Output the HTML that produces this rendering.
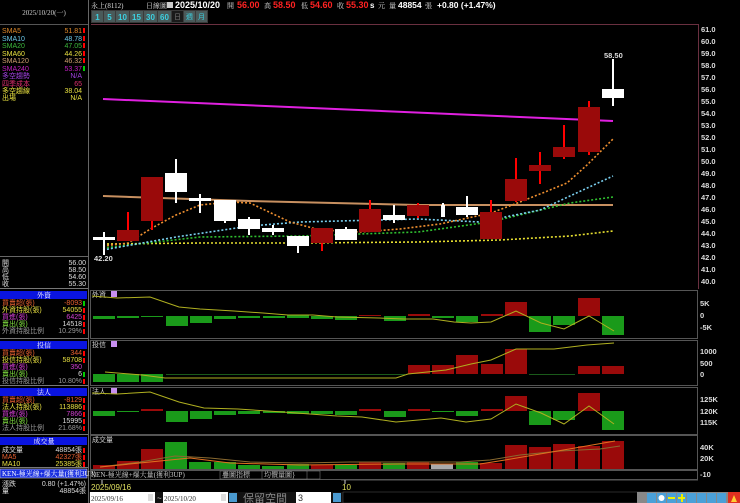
<!DOCTYPE html>
<html><head><meta charset="utf-8">
<style>
html,body{margin:0;padding:0;background:#000;width:740px;height:503px;overflow:hidden}
svg{display:block}
text{font-family:"Liberation Sans","Noto Sans CJK TC",sans-serif}
.s{font-family:"Liberation Serif","Noto Serif CJK SC",serif;font-size:7px}
</style></head><body>
<svg width="740" height="503" viewBox="0 0 740 503" xmlns="http://www.w3.org/2000/svg">
<rect width="740" height="503" fill="#000"/>
<!-- left panel -->
<line x1="88.5" y1="0" x2="88.5" y2="503" stroke="#666"/>
<line x1="0" y1="24.5" x2="88" y2="24.5" stroke="#555"/>
<text x="44" y="15" class="s" fill="#ccc" text-anchor="middle" font-size="8">2025/10/20(一)</text>
<g class="s" font-size="7">
<text x="2" y="33" fill="#e08a2a">SMA5</text><text x="82" y="33" fill="#e08a2a" text-anchor="end">51.81</text>
<text x="2" y="41" fill="#6cc8e8">SMA10</text><text x="82" y="41" fill="#6cc8e8" text-anchor="end">48.78</text>
<text x="2" y="48" fill="#3cb83c">SMA20</text><text x="82" y="48" fill="#3cb83c" text-anchor="end">47.05</text>
<text x="2" y="56" fill="#e8e040">SMA60</text><text x="82" y="56" fill="#e8e040" text-anchor="end">44.26</text>
<text x="2" y="63" fill="#d0a070">SMA120</text><text x="82" y="63" fill="#d0a070" text-anchor="end">46.32</text>
<text x="2" y="71" fill="#c020c0">SMA240</text><text x="82" y="71" fill="#c020c0" text-anchor="end">53.37</text>
<text x="2" y="78" fill="#a040e0">多空趨勢</text><text x="82" y="78" fill="#a040e0" text-anchor="end">N/A</text>
<text x="2" y="86" fill="#e03070">四季成本</text><text x="82" y="86" fill="#e03070" text-anchor="end">65</text>
<text x="2" y="93" fill="#e8e040">多空趨線</text><text x="82" y="93" fill="#e8e040" text-anchor="end">38.04</text>
<text x="2" y="100" fill="#e8e040">出場</text><text x="82" y="100" fill="#e8e040" text-anchor="end">N/A</text>
</g>
<g fill="#f00"><rect x="83" y="28" width="2" height="5"/><rect x="83" y="36" width="2" height="5"/><rect x="83" y="43" width="2" height="5"/><rect x="83" y="51" width="2" height="5"/><rect x="83" y="58" width="2" height="5"/></g>
<rect x="83" y="66" width="2" height="5" fill="#0c0"/>
<line x1="0" y1="256.5" x2="88" y2="256.5" stroke="#666"/>
<g class="s" fill="#ddd">
<text x="2" y="265">開</text><text x="86" y="265" text-anchor="end">56.00</text>
<text x="2" y="272">高</text><text x="86" y="272" text-anchor="end">58.50</text>
<text x="2" y="279">低</text><text x="86" y="279" text-anchor="end">54.60</text>
<text x="2" y="286">收</text><text x="86" y="286" text-anchor="end">55.30</text>
</g>
<line x1="0" y1="288.5" x2="88" y2="288.5" stroke="#777"/>
<rect x="0" y="291" width="87" height="8" fill="#0a14e0"/><text x="44" y="297.5" class="s" fill="#fff" text-anchor="middle">外資</text>
<g class="s">
<text x="2" y="305" fill="#e86030">買賣超(張)</text><text x="82" y="305" fill="#e86030" text-anchor="end">-8093</text>
<text x="2" y="312" fill="#e8e040">外資持股(張)</text><text x="82" y="312" fill="#e8e040" text-anchor="end">54055</text>
<text x="2" y="319" fill="#d040d0">買進(張)</text><text x="82" y="319" fill="#d040d0" text-anchor="end">6425</text>
<text x="2" y="326" fill="#80e040">賣出(張)</text><text x="82" y="326" fill="#ddd" text-anchor="end">14518</text>
<text x="2" y="333" fill="#999">外資持股比例</text><text x="82" y="333" fill="#999" text-anchor="end">10.29%</text>
</g>
<line x1="0" y1="338.5" x2="88" y2="338.5" stroke="#777"/>
<rect x="0" y="341" width="87" height="8" fill="#0a14e0"/><text x="44" y="347.5" class="s" fill="#fff" text-anchor="middle">投信</text>
<g class="s">
<text x="2" y="355" fill="#e86030">買賣超(張)</text><text x="82" y="355" fill="#e86030" text-anchor="end">344</text>
<text x="2" y="362" fill="#e8e040">投信持股(張)</text><text x="82" y="362" fill="#e8e040" text-anchor="end">58708</text>
<text x="2" y="369" fill="#d040d0">買進(張)</text><text x="82" y="369" fill="#d040d0" text-anchor="end">350</text>
<text x="2" y="376" fill="#80e040">賣出(張)</text><text x="82" y="376" fill="#ddd" text-anchor="end">6</text>
<text x="2" y="383" fill="#999">投信持股比例</text><text x="82" y="383" fill="#999" text-anchor="end">10.80%</text>
</g>
<line x1="0" y1="385.5" x2="88" y2="385.5" stroke="#777"/>
<rect x="0" y="388" width="87" height="8" fill="#0a14e0"/><text x="44" y="394.5" class="s" fill="#fff" text-anchor="middle">法人</text>
<g class="s">
<text x="2" y="402" fill="#e86030">買賣超(張)</text><text x="82" y="402" fill="#e86030" text-anchor="end">-8129</text>
<text x="2" y="409" fill="#e8e040">法人持股(張)</text><text x="82" y="409" fill="#e8e040" text-anchor="end">113886</text>
<text x="2" y="416" fill="#d040d0">買進(張)</text><text x="82" y="416" fill="#d040d0" text-anchor="end">7866</text>
<text x="2" y="423" fill="#80e040">賣出(張)</text><text x="82" y="423" fill="#ddd" text-anchor="end">15995</text>
<text x="2" y="430" fill="#999">法人持股比例</text><text x="82" y="430" fill="#999" text-anchor="end">21.68%</text>
</g>
<line x1="0" y1="434.5" x2="88" y2="434.5" stroke="#777"/>
<rect x="0" y="437" width="87" height="8" fill="#0a14e0"/><text x="44" y="443.5" class="s" fill="#fff" text-anchor="middle">成交量</text>
<g class="s">
<text x="2" y="452" fill="#ddd">成交量</text><text x="82" y="452" fill="#ddd" text-anchor="end">48854張</text>
<text x="2" y="459" fill="#e86030">MA5</text><text x="82" y="459" fill="#e86030" text-anchor="end">42327張</text>
<text x="2" y="466" fill="#e8e040">MA10</text><text x="82" y="466" fill="#e8e040" text-anchor="end">25385張</text>
</g>
<g fill="#f00"><rect x="83" y="301" width="2" height="5" fill="#0c0"/><rect x="83" y="308" width="2" height="5"/><rect x="83" y="315" width="2" height="5"/><rect x="83" y="322" width="2" height="5"/><rect x="83" y="329" width="2" height="5"/>
<rect x="83" y="351" width="2" height="5"/><rect x="83" y="358" width="2" height="5"/><rect x="83" y="372" width="2" height="5" fill="#0c0"/><rect x="83" y="379" width="2" height="5"/>
<rect x="83" y="398" width="2" height="5"/><rect x="83" y="405" width="2" height="5"/><rect x="83" y="412" width="2" height="5"/><rect x="83" y="419" width="2" height="5"/><rect x="83" y="426" width="2" height="5"/>
<rect x="83" y="448" width="2" height="5"/><rect x="83" y="455" width="2" height="5"/><rect x="83" y="462" width="2" height="5"/></g>
<line x1="0" y1="467.5" x2="88" y2="467.5" stroke="#777"/>
<rect x="0" y="469" width="87" height="9" fill="#1a30e0" stroke="#ccc" stroke-width=".6"/><text x="2" y="476" class="s" fill="#fff">KEN-極光線+爆大量(獲利3UP)</text>
<g class="s" fill="#ddd"><text x="2" y="486">漲跌</text><text x="86" y="486" text-anchor="end">0.80 (+1.47%)</text>
<text x="2" y="493">量</text><text x="86" y="493" text-anchor="end">48854張</text></g>

<!-- top bar -->
<g font-size="8" fill="#ddd">
<text x="91" y="8" class="s">永上(8112)</text>
<text x="146" y="8" class="s">日線圖</text>
<rect x="167" y="2" width="6" height="6" fill="#ccc"/>
<text x="175" y="8" font-weight="bold" font-size="9" fill="#fff">2025/10/20</text>
<text x="227" y="8" class="s">開</text><text x="237" y="8" font-weight="bold" font-size="9" fill="#f22">56.00</text>
<text x="264" y="8" class="s">高</text><text x="273" y="8" font-weight="bold" font-size="9" fill="#f22">58.50</text>
<text x="301" y="8" class="s">低</text><text x="310" y="8" font-weight="bold" font-size="9" fill="#f22">54.60</text>
<text x="337" y="8" class="s">收</text><text x="346" y="8" font-weight="bold" font-size="9" fill="#f22">55.30</text>
<text x="370" y="8" font-weight="bold" font-size="8" fill="#fff">s</text><text x="378" y="8" class="s">元</text>
<text x="389" y="8" class="s">量</text><text x="398" y="8" font-weight="bold" font-size="8.5" fill="#fff">48854</text><text x="425" y="8" class="s">張</text>
<text x="437" y="8" font-weight="bold" font-size="8.5" fill="#fff">+0.80 (+1.47%)</text>
</g>
<!-- interval buttons -->
<rect x="91" y="10" width="117" height="13" fill="#3a3a3a"/>
<g fill="#4a5a5a"><rect x="92" y="11" width="11" height="11"/><rect x="104" y="11" width="11" height="11"/><rect x="116" y="11" width="13" height="11"/><rect x="130" y="11" width="13" height="11"/><rect x="144" y="11" width="13" height="11"/><rect x="158" y="11" width="13" height="11"/><rect x="184" y="11" width="11" height="11"/><rect x="196" y="11" width="11" height="11"/></g>
<rect x="172" y="11" width="11" height="11" fill="#1a1a1a"/>
<g font-size="8" font-weight="bold" fill="#3cd0e0" text-anchor="middle"><text x="97.5" y="20">1</text><text x="109.5" y="20">5</text><text x="122.5" y="20">10</text><text x="136.5" y="20">15</text><text x="150.5" y="20">30</text><text x="164.5" y="20">60</text></g>
<g class="s" fill="#3cd0e0" text-anchor="middle"><text x="177.5" y="19" fill="#777">日</text><text x="189.5" y="19">週</text><text x="201.5" y="19">月</text></g>

<!-- main chart frame -->
<path d="M91 24.5H698.5V289" fill="none" stroke="#6a3040"/>
<g font-size="7.5" font-weight="bold" fill="#ddd">
<text x="701" y="32">61.0</text><text x="701" y="44">60.0</text><text x="701" y="56">59.0</text><text x="701" y="68">58.0</text><text x="701" y="80">57.0</text><text x="701" y="92">56.0</text><text x="701" y="104">55.0</text><text x="701" y="116">54.0</text><text x="701" y="128">53.0</text><text x="701" y="140">52.0</text><text x="701" y="152">51.0</text><text x="701" y="164">50.0</text><text x="701" y="176">49.0</text><text x="701" y="188">48.0</text><text x="701" y="200">47.0</text><text x="701" y="212">46.0</text><text x="701" y="224">45.0</text><text x="701" y="236">44.0</text><text x="701" y="248">43.0</text><text x="701" y="260">42.0</text><text x="701" y="272">41.0</text><text x="701" y="284">40.0</text>
</g>
<!-- MAs -->
<line x1="103" y1="99" x2="613" y2="121" stroke="#e020e0" stroke-width="2"/>
<polyline points="103,196 250,201 418,205 613,205" fill="none" stroke="#c89060" stroke-width="2"/>
<g fill="none" stroke-width="1.6" stroke-dasharray="2,2">
<polyline points="103,244 200,243 300,243 418,242 500,240 570,236 613,231" stroke="#e8e030"/>
<polyline points="103,248 200,237 300,236 418,232 490,222 570,203 613,197" stroke="#30c030"/>
<polyline points="103,250 176,237 250,226 300,222 418,219 480,222 540,210 570,196 613,176" stroke="#7ad0f0"/>
<polyline points="103,246 128,243 152,228 176,215 200,205 230,202 250,203 290,222 320,230 360,232 400,229 440,224 491,213 520,202 545,192 567,183 587,165 613,139" stroke="#f09030"/>
</g>
<!-- candles -->
<g stroke="#f00" stroke-width="2">
<line x1="128" y1="212" x2="128" y2="241"/><line x1="152" y1="177" x2="152" y2="230"/><line x1="322" y1="228" x2="322" y2="251"/><line x1="370" y1="200" x2="370" y2="232"/><line x1="418" y1="203" x2="418" y2="218"/><line x1="491" y1="200" x2="491" y2="239"/><line x1="516" y1="158" x2="516" y2="202"/><line x1="540" y1="152" x2="540" y2="184"/><line x1="564" y1="125" x2="564" y2="159"/><line x1="589" y1="101" x2="589" y2="155"/>
</g>
<g fill="#9a0a0a">
<rect x="117" y="230" width="22" height="11"/><rect x="141" y="177" width="22" height="44"/><rect x="311" y="228" width="22" height="15"/><rect x="359" y="209" width="22" height="23"/><rect x="407" y="205" width="22" height="11"/><rect x="480" y="212" width="22" height="27"/><rect x="505" y="179" width="22" height="22"/><rect x="529" y="165" width="22" height="6"/><rect x="553" y="147" width="22" height="10"/><rect x="578" y="107" width="22" height="45"/>
</g>
<g stroke="#fff" stroke-width="2">
<line x1="104" y1="232" x2="104" y2="255"/><line x1="176" y1="159" x2="176" y2="203"/><line x1="200" y1="194" x2="200" y2="213"/><line x1="225" y1="200" x2="225" y2="223"/><line x1="249" y1="217" x2="249" y2="235"/><line x1="273" y1="225" x2="273" y2="235"/><line x1="298" y1="236" x2="298" y2="253"/><line x1="346" y1="227" x2="346" y2="240"/><line x1="394" y1="205" x2="394" y2="223"/><line x1="443" y1="203" x2="443" y2="217"/><line x1="467" y1="196" x2="467" y2="217"/><line x1="613" y1="59" x2="613" y2="106"/>
</g>
<g fill="#fff">
<rect x="93" y="237" width="22" height="3"/><rect x="165" y="173" width="22" height="19"/><rect x="189" y="198" width="22" height="3"/><rect x="214" y="200" width="22" height="21"/><rect x="238" y="219" width="22" height="10"/><rect x="262" y="228" width="22" height="4"/><rect x="287" y="236" width="22" height="10"/><rect x="335" y="229" width="22" height="11"/><rect x="383" y="215" width="22" height="5"/><rect x="441" y="205" width="4" height="12"/><rect x="456" y="207" width="22" height="8"/><rect x="602" y="89" width="22" height="9"/>
</g>
<text x="94" y="261" font-size="7.5" font-weight="bold" fill="#ddd">42.20</text>
<text x="604" y="58" font-size="7.5" font-weight="bold" fill="#ddd">58.50</text>

<!-- sub panels frames -->
<g fill="none" stroke="#555">
<rect x="90.5" y="290.5" width="607" height="48"/>
<rect x="90.5" y="340.5" width="607" height="45"/>
<rect x="90.5" y="387.5" width="607" height="47"/>
<rect x="90.5" y="435.5" width="607" height="34"/>
<rect x="90.5" y="470.5" width="607" height="9"/>
</g>
<g class="s" fill="#ccc"><text x="92" y="297">外資</text><text x="92" y="347">投信</text><text x="92" y="394">法人</text><text x="92" y="442">成交量</text></g>
<g fill="#c890f0"><rect x="111" y="291" width="6" height="6"/><rect x="111" y="341" width="6" height="6"/><rect x="111" y="388" width="6" height="6"/></g>
<g font-size="7.5" font-weight="bold" fill="#ddd">
<text x="700" y="306">5K</text><text x="700" y="318">0</text><text x="700" y="330">-5K</text>
<text x="700" y="354">1000</text><text x="700" y="366">500</text><text x="700" y="377">0</text>
<text x="700" y="402">125K</text><text x="700" y="414">120K</text><text x="700" y="425">115K</text>
<text x="700" y="450">40K</text><text x="700" y="461">20K</text><text x="700" y="477">-10</text>
</g>
<!-- panel1 bars zero 316 ; x = 93 + (k-1)*24.25 -->
<g fill="#1a9a1a">
<rect x="93" y="316" width="22" height="3"/><rect x="117" y="316" width="22" height="2"/><rect x="141" y="316" width="22" height="1"/><rect x="166" y="316" width="22" height="10"/><rect x="190" y="316" width="22" height="7"/><rect x="214" y="316" width="22" height="3"/><rect x="238" y="316" width="22" height="2"/><rect x="263" y="316" width="22" height="2"/><rect x="287" y="315" width="22" height="3"/><rect x="311" y="316" width="22" height="3"/><rect x="335" y="316" width="22" height="4"/><rect x="384" y="316" width="22" height="5"/><rect x="432" y="316" width="22" height="2"/><rect x="456" y="316" width="22" height="6"/><rect x="529" y="316" width="22" height="16"/><rect x="553" y="316" width="22" height="9"/><rect x="602" y="316" width="22" height="19"/>
</g>
<g fill="#9a0a0a"><rect x="359" y="315" width="22" height="1"/><rect x="408" y="314" width="22" height="2"/><rect x="481" y="314" width="22" height="2"/><rect x="505" y="302" width="22" height="14"/><rect x="578" y="298" width="22" height="18"/></g>
<polyline points="92,296 117,298 150,297 179,307 200,309 234,311 263,313 288,315 313,315 337,317 379,318 404,319 433,319 454,322 471,323 491,322 516,311 541,323 564,329 589,316 614,331" fill="none" stroke="#b0b020" stroke-width="1"/>
<!-- panel2 zero 374 -->
<g fill="#1a9a1a"><rect x="93" y="374" width="22" height="8"/><rect x="117" y="374" width="22" height="8"/><rect x="141" y="374" width="22" height="8"/></g>
<line x1="166" y1="374.5" x2="405" y2="374.5" stroke="#1a5a1a"/>
<line x1="529" y1="374.5" x2="575" y2="374.5" stroke="#1a5a1a"/>
<g fill="#9a0a0a"><rect x="408" y="365" width="22" height="9"/><rect x="432" y="365" width="22" height="9"/><rect x="456" y="355" width="22" height="19"/><rect x="481" y="364" width="22" height="10"/><rect x="505" y="349" width="22" height="25"/><rect x="578" y="366" width="22" height="8"/><rect x="602" y="366" width="22" height="8"/></g>
<polyline points="105,372 142,375 165,378 396,378 408,374 446,370 471,364 491,360 516,349 554,349 587,345 614,343" fill="none" stroke="#b0b020"/>
<!-- panel3 zero 411 -->
<g fill="#1a9a1a"><rect x="93" y="411" width="22" height="5"/><rect x="117" y="411" width="22" height="1"/><rect x="166" y="411" width="22" height="11"/><rect x="190" y="411" width="22" height="8"/><rect x="214" y="411" width="22" height="4"/><rect x="238" y="411" width="22" height="3"/><rect x="263" y="411" width="22" height="2"/><rect x="287" y="411" width="22" height="3"/><rect x="311" y="411" width="22" height="3"/><rect x="335" y="411" width="22" height="4"/><rect x="384" y="411" width="22" height="6"/><rect x="432" y="411" width="22" height="1"/><rect x="456" y="411" width="22" height="5"/><rect x="529" y="411" width="22" height="14"/><rect x="553" y="411" width="22" height="9"/><rect x="602" y="411" width="22" height="19"/></g>
<g fill="#9a0a0a"><rect x="141" y="409" width="22" height="2"/><rect x="359" y="409" width="22" height="2"/><rect x="408" y="409" width="22" height="2"/><rect x="481" y="409" width="22" height="2"/><rect x="505" y="396" width="22" height="15"/><rect x="578" y="393" width="22" height="18"/></g>
<polyline points="92,393 117,394 150,392 179,402 204,408 238,409 283,412 337,416 362,417 396,422 441,418 466,422 491,419 516,404 541,413 564,424 589,406 614,424" fill="none" stroke="#b0b020"/>
<!-- volume base 469 -->
<g fill="#9a0a0a"><rect x="93" y="465" width="22" height="4"/><rect x="117" y="461" width="22" height="8"/><rect x="141" y="449" width="22" height="20"/><rect x="311" y="465" width="22" height="4"/><rect x="359" y="462" width="22" height="7"/><rect x="407" y="462" width="22" height="7"/><rect x="480" y="463" width="22" height="6"/><rect x="505" y="445" width="22" height="24"/><rect x="529" y="447" width="22" height="22"/><rect x="553" y="444" width="22" height="25"/><rect x="578" y="446" width="22" height="23"/><rect x="602" y="441" width="22" height="28"/></g>
<g fill="#1a9a1a"><rect x="165" y="442" width="22" height="27"/><rect x="189" y="462" width="22" height="7"/><rect x="214" y="462" width="22" height="7"/><rect x="238" y="465" width="22" height="4"/><rect x="262" y="466" width="22" height="3"/><rect x="287" y="464" width="22" height="5"/><rect x="335" y="465" width="22" height="4"/><rect x="383" y="463" width="22" height="6"/><rect x="456" y="462" width="22" height="7"/></g>
<rect x="431" y="464" width="22" height="5" fill="#aaa"/>
<polyline points="100,467 140,462 175,456 210,458 250,462 300,463 350,462 400,462 460,462 490,460 520,455 560,451 600,449 620,446" fill="none" stroke="#8a6a30"/>
<polyline points="100,467 150,462 190,458 230,463 300,465 400,464 480,464 505,460 540,454 575,448 615,441" fill="none" stroke="#e07020"/>
<!-- indicator row -->
<text x="91" y="477" class="s" fill="#ccc">KEN-極光線+爆大量(獲利3UP)</text>
<rect x="220" y="471" width="100" height="8" fill="#000" stroke="#888" stroke-width=".5"/><text x="222" y="477" class="s" fill="#ccc">疊圖指標</text>
<rect x="262" y="471" width="45" height="8" fill="#000" stroke="#888" stroke-width=".5"/><text x="264" y="477" class="s" fill="#ccc">均價量圖}</text>
<line x1="341" y1="480" x2="698" y2="480" stroke="#555"/>
<line x1="345" y1="480" x2="345" y2="484" stroke="#ccc"/>
<line x1="102" y1="480" x2="102" y2="484" stroke="#ccc"/>
<text x="91" y="490" font-size="8" fill="#e0e060">2025/09/16</text>
<text x="342" y="490" font-size="8" fill="#e0e060">10</text>
<!-- bottom toolbar -->
<rect x="89" y="492" width="651" height="11" fill="#111"/>
<rect x="90" y="492" width="65" height="11" fill="#fff"/><text x="91" y="501" font-size="9" fill="#333" class="s">2025/09/16</text><rect x="148" y="494" width="5" height="7" fill="#ddd"/>
<text x="157" y="501" font-size="8" fill="#ccc">~</text>
<rect x="163" y="492" width="65" height="11" fill="#fff"/><text x="164" y="501" font-size="9" fill="#333" class="s">2025/10/20</text><rect x="221" y="494" width="5" height="7" fill="#ddd"/>
<rect x="229" y="493" width="8" height="9" fill="#4a9ad0"/>
<text x="243" y="502" font-size="11" fill="#888" font-family="Noto Sans CJK TC,sans-serif">保留空間</text>
<rect x="296" y="492" width="35" height="11" fill="#fff"/><text x="298" y="501" font-size="9" fill="#333">3</text>
<rect x="333" y="493" width="8" height="9" fill="#4a9ad0"/>
<rect x="343" y="492" width="335" height="11" fill="#000" stroke="#555" stroke-width=".5"/>
<rect x="637" y="492" width="103" height="11" fill="#888"/>
<g fill="#4aa0d8"><rect x="647" y="493" width="9" height="10"/><rect x="657" y="493" width="9" height="10"/><rect x="667" y="493" width="9" height="10"/><rect x="677" y="493" width="9" height="10"/><rect x="687" y="493" width="9" height="10"/><rect x="697" y="493" width="9" height="10"/><rect x="707" y="493" width="9" height="10"/><rect x="717" y="493" width="9" height="10"/></g>
<circle cx="661.5" cy="498" r="3" fill="#fff"/>
<rect x="668" y="497" width="7" height="2" fill="#ee0"/><rect x="678" y="497" width="7" height="2" fill="#ee0"/><rect x="681" y="494" width="2" height="8" fill="#ee0"/>
<rect x="728" y="492" width="12" height="11" fill="#e03020"/><path d="M731 502 L734 495 L737 502Z" fill="#fc3"/>
</svg>
</body></html>
